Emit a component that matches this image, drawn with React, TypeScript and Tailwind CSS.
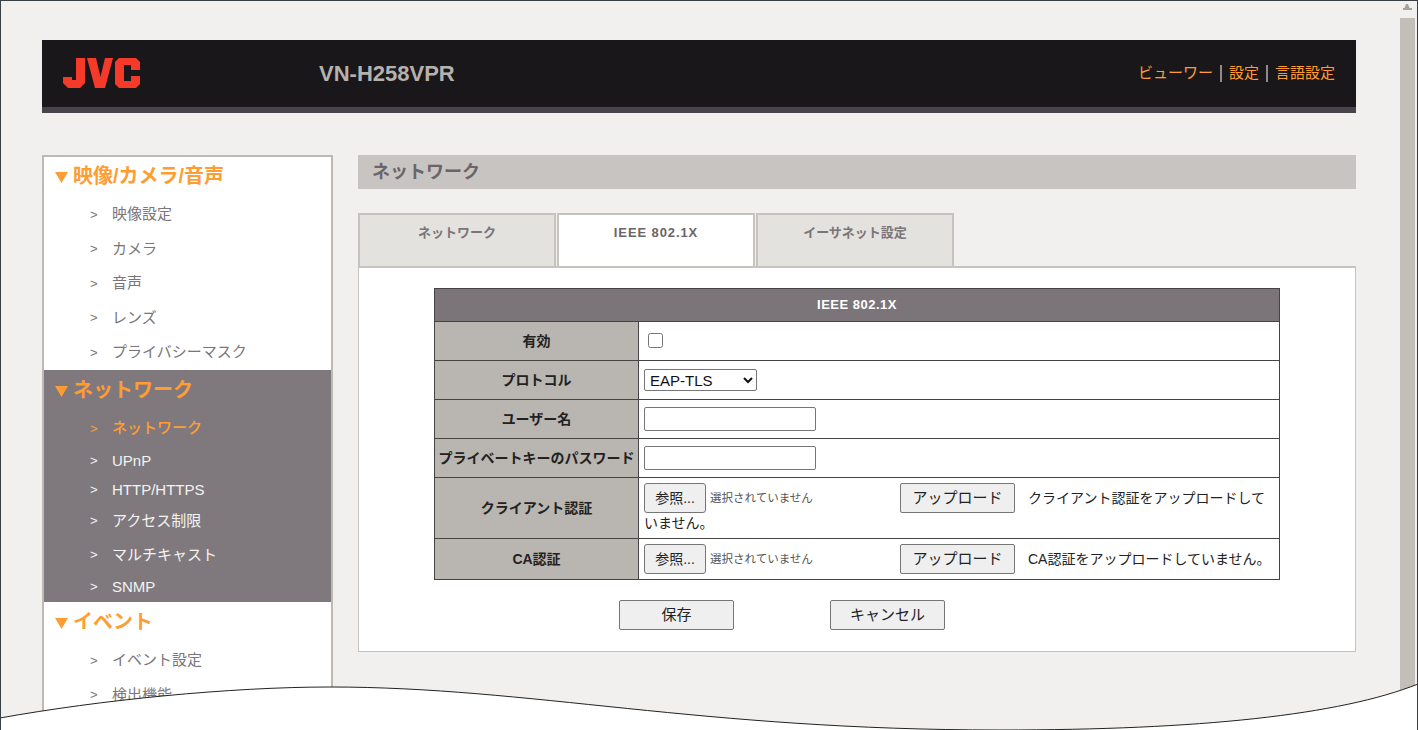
import React from 'react'

const font = '[font-family:"Liberation_Sans","Noto_Sans_CJK_JP",sans-serif]'

const SideItem = ({ label, dark, active, h }: { label: string; dark?: boolean; active?: boolean; h: string }) => (
  <div className={`flex items-center pl-[46px] text-[15px] ${h} ${active ? 'text-[#ff9d33] font-medium' : dark ? 'text-[#f4f3f1]' : 'text-[#7b7579]'}`}>
    <span className="w-[22px] text-[13px]">&gt;</span>
    <span>{label}</span>
  </div>
)

const SideHead = ({ label, h }: { label: string; h: string }) => (
  <div className={`flex items-center pl-[11px] text-[20px] font-bold text-[#ff9d33] ${h}`}>
    <svg width="13" height="11" viewBox="0 0 13 11" className="mr-[5px] mt-[3px] shrink-0">
      <path d="M0 0h13L6.5 11z" fill="#ff9d33" />
    </svg>
    <span>{label}</span>
  </div>
)

const FileBtn = () => (
  <>
    <button className="inline-block h-[30px] w-[62px] rounded-[3px] border border-[#767676] bg-[#efefef] text-[14px] text-[#222] align-middle">参照...</button>
    <span className="ml-[4px] inline-block w-[190px] text-[11.5px] text-[#555] align-middle">選択されていません</span>
  </>
)

const UploadBtn = () => (
  <button className="inline-block h-[30px] w-[115px] rounded-[2px] border border-[#767676] bg-[#efefef] text-[15px] text-[#222] align-middle">アップロード</button>
)

const Label = ({ children }: { children: React.ReactNode }) => (
  <td className="border border-[#444] bg-[#b9b5b0] p-0 text-center text-[14px] font-bold text-[#222]">{children}</td>
)

const Field = ({ children, wrap }: { children: React.ReactNode; wrap?: boolean }) => (
  <td className={`border border-[#444] bg-white pl-[5px] pr-[4px] text-[14px] text-[#222] ${wrap ? 'pt-[5px] pb-0 align-top leading-[18px]' : 'py-0 leading-[24px]'}`}>{children}</td>
)

const tabClass = 'flex h-[53px] w-[198px] items-start justify-center border-x-2 border-t-2 border-[#c6c3be] pt-[8px] text-[13px] font-bold'

export default function App() {
  return (
    <div className={`relative flex h-[730px] overflow-hidden border-x border-t border-[#3a3f45] bg-[#f1f0ee] ${font}`}>
      <div className="w-[1399px] shrink-0 pl-[41px] pr-[44px] pt-[39px]">
        <header className="h-[73px] border-b-[6px] border-[#48424a] bg-[#1a171b]">
          <div className="flex h-[67px] items-center pl-[21px] pr-[21px]">
            <svg width="77" height="31" viewBox="0 0 77 31" className="shrink-0">
              <path d="M13 0h9v25l-5 5H5l-5-5v-6h9v3h4z" fill="#f53a2a" />
              <path d="M24 0h9l4.500 19L42 0h8l-8 30H32z" fill="#f53a2a" />
              <path d="M56 0h17l4 4v8h-9V7h-7v16h7v-5h9v8l-4 4H56l-4-4V4z" fill="#f53a2a" />
            </svg>
            <div className="ml-[179px] text-[22px] font-bold text-[#b5b2ae]">VN-H258VPR</div>
            <nav className="ml-auto flex items-center text-[15px] text-[#ff9d33]">
              <span>ビューワー</span>
              <span className="mx-[7px] h-[17px] w-[2px] bg-[#8d8a88]" />
              <span>設定</span>
              <span className="mx-[7px] h-[17px] w-[2px] bg-[#8d8a88]" />
              <span>言語設定</span>
            </nav>
          </div>
        </header>

        <div className="mt-[42px] flex">
          <aside className="h-[620px] w-[291px] shrink-0 border-2 border-b-0 border-[#bdbab5] bg-white">
            <SideHead label="映像/カメラ/音声" h="h-[37px]" />
            <SideItem label="映像設定" h="h-[35px] mt-[3px]" />
            <SideItem label="カメラ" h="h-[34px]" />
            <SideItem label="音声" h="h-[35px]" />
            <SideItem label="レンズ" h="h-[34px]" />
            <SideItem label="プライバシーマスク" h="h-[35px]" />
            <div className="bg-[#7f797d]">
              <SideHead label="ネットワーク" h="h-[39px]" />
              <SideItem label="ネットワーク" h="h-[35px] mt-[2px]" active dark />
              <SideItem label="UPnP" h="h-[30px]" dark />
              <SideItem label="HTTP/HTTPS" h="h-[28px]" dark />
              <SideItem label="アクセス制限" h="h-[34px]" dark />
              <SideItem label="マルチキャスト" h="h-[34px]" dark />
              <SideItem label="SNMP" h="h-[30px]" dark />
            </div>
            <SideHead label="イベント" h="h-[39px]" />
            <SideItem label="イベント設定" h="h-[35px] mt-[2px]" />
            <SideItem label="検出機能" h="h-[34px]" />
          </aside>

          <main className="ml-[25px] flex-1">
            <div className="flex h-[34px] items-center bg-[#c8c4c1] pl-[14px] text-[18px] font-bold text-[#6a6569]">ネットワーク</div>
            <div className="mt-[24px] flex gap-px">
              <div className={`${tabClass} bg-[#e4e2df] text-[#7b7579]`}>ネットワーク</div>
              <div className={`${tabClass} bg-white tracking-[0.9px] text-[#6a6569]`}>IEEE 802.1X</div>
              <div className={`${tabClass} bg-[#e4e2df] text-[#7b7579]`}>イーサネット設定</div>
            </div>
            <section className="h-[386px] border border-t-2 border-[#c6c3be] bg-white pt-[20px]">
              <table className="mx-auto w-[846px] table-fixed border-collapse">
                <colgroup>
                  <col className="w-[204px]" />
                  <col />
                </colgroup>
                <tbody>
                  <tr className="h-[33px]">
                    <td colSpan={2} className="border border-[#444] bg-[#7b7579] text-center text-[13px] font-bold tracking-[0.5px] text-white">IEEE 802.1X</td>
                  </tr>
                  <tr className="h-[39px]">
                    <Label>有効</Label>
                    <Field><input type="checkbox" className="-mt-px ml-[4px] block h-[15px] w-[15px]" /></Field>
                  </tr>
                  <tr className="h-[39px]">
                    <Label>プロトコル</Label>
                    <Field>
                      <select defaultValue="EAP-TLS" className="block h-[22px] w-[113px] rounded-[2px] border border-[#767676] bg-white pl-px text-[15px] text-[#111]">
                        <option>EAP-TLS</option>
                        <option>PEAP</option>
                      </select>
                    </Field>
                  </tr>
                  <tr className="h-[39px]">
                    <Label>ユーザー名</Label>
                    <Field><input type="text" className="block h-[24px] w-[172px] rounded-[2px] border border-[#767676]" /></Field>
                  </tr>
                  <tr className="h-[39px]">
                    <Label>プライベートキーのパスワード</Label>
                    <Field><input type="password" className="block h-[24px] w-[172px] rounded-[2px] border border-[#767676]" /></Field>
                  </tr>
                  <tr className="h-[61px]">
                    <Label>クライアント認証</Label>
                    <Field wrap>
                      <FileBtn />
                      <UploadBtn />
                      <span className="ml-[13px] align-middle">クライアント認証をアップロードしていません。</span>
                    </Field>
                  </tr>
                  <tr className="h-[41px]">
                    <Label>CA認証</Label>
                    <Field>
                      <FileBtn />
                      <UploadBtn />
                      <span className="ml-[13px] align-middle">CA認証をアップロードしていません。</span>
                    </Field>
                  </tr>
                </tbody>
              </table>
              <div className="mt-[20px] flex gap-[96px] pl-[260px]">
                <button className="h-[30px] w-[115px] rounded-[2px] border border-[#767676] bg-[#efefef] text-[15px] text-[#222]">保存</button>
                <button className="h-[30px] w-[115px] rounded-[2px] border border-[#767676] bg-[#efefef] text-[15px] text-[#222]">キャンセル</button>
              </div>
            </section>
          </main>
        </div>
      </div>

      <div className="flex w-[15px] shrink-0 flex-col items-center">
        <svg width="9" height="7" viewBox="0 0 9 7" className="mt-[3px] mb-[7px] shrink-0">
          <path d="M3 0h2l1.500 4H9v2H0V4h1.500z" fill="#a5a19c" />
        </svg>
        <div className="w-full flex-1 bg-[#c2bfb9]" />
      </div>

      {/* torn paper edge at the bottom of the capture */}
      <svg width="1418" height="60" viewBox="0 670 1418 60" className="absolute bottom-0 -left-px">
        <path d="M0 718C100 700 230 687 330 687C530 687 700 730 1000 730C1200 730 1340 715 1418 684V730H0Z" fill="#fff" />
        <path d="M0 718C100 700 230 687 330 687C530 687 700 730 1000 730C1200 730 1340 715 1418 684" fill="none" stroke="#222" strokeWidth="1" />
      </svg>
    </div>
  )
}
